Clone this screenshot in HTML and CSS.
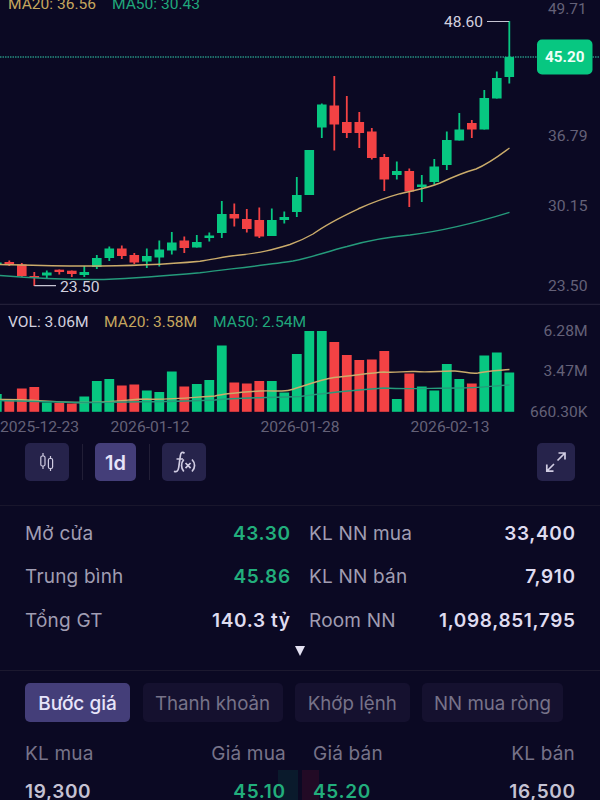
FILE: index.html
```html
<!DOCTYPE html>
<html lang="vi">
<head>
    <meta charset="UTF-8">
    <meta name="viewport" content="width=device-width, initial-scale=1.0">
    <title>Biểu đồ giá</title>
    <link rel="stylesheet" href="styles.css">
</head>
<body>
    <svg class="chart" width="600" height="438" viewBox="0 0 600 438">
        <line class="current-line" x1="0" y1="57" x2="600" y2="57"/>
        <line class="pane-line" x1="0" y1="304.3" x2="600" y2="304.3"/>
        <g id="candles"></g>
        <g id="volumes"></g>

        <!-- moving averages, price pane -->
        <path class="ma20" d="M0 264.5C20 265 50 266 85 266C120 266 160 265 200 261.2C215 259 225 256.500 240 255C262 252.500 272 250 290 244.500C300 241 306 238 313 234C328 223 342 216.500 359 208.500C375 201.500 388 197 400 193.700C415 190 425 189 440 183C455 176 465 172 476 169C490 163 500 155 509.500 148"/>
        <path class="ma50" d="M0 275.500C30 278 65 280 104 279.500C140 278 170 275.500 200 272.800C230 269 270 264.500 293 261C312 257.500 325 252 347 246.500C370 240 385 237 410 235C445 230.500 475 223 509.500 212.300"/>

        <!-- moving averages, volume pane -->
        <path class="ma20" d="M0 399.500C20 399 40 401 75 402.500C110 403 130 399 147 399C165 400 185 398 215 396C225 393.500 245 392 260 391C275 390.500 283 392 290 390C305 386 315 381 334 377.500C355 375.500 370 373 384 372C395 373 405 371 415 371.500C430 373 440 370.500 455 371C465 371.500 470 374 478 373C490 370.500 500 370.500 509.500 369.500"/>
        <path class="ma50" d="M0 400.500C40 401.500 70 402.500 95 402.500C130 401.500 180 402 215 400C240 397 270 398 300 396.500C325 393 345 391 384 388C410 389.500 430 388 459 388C480 388 490 386 509.500 385"/>

        <path class="callout" d="M487 21.500H509M34.300 285.700H56"/>
        <text class="callout-text" x="444" y="27.300" textLength="39" lengthAdjust="spacingAndGlyphs">48.60</text>
        <text class="callout-text" x="60" y="291.700" textLength="39.500" lengthAdjust="spacingAndGlyphs">23.50</text>

        <text class="legend gold" x="8" y="9" textLength="88" lengthAdjust="spacingAndGlyphs">MA20: 36.56</text>
        <text class="legend green" x="112" y="9" textLength="88" lengthAdjust="spacingAndGlyphs">MA50: 30.43</text>
        <text class="legend light" x="8" y="326.700" textLength="80.500" lengthAdjust="spacingAndGlyphs">VOL: 3.06M</text>
        <text class="legend gold" x="104" y="326.700" textLength="93" lengthAdjust="spacingAndGlyphs">MA20: 3.58M</text>
        <text class="legend green" x="213" y="326.700" textLength="93" lengthAdjust="spacingAndGlyphs">MA50: 2.54M</text>

        <text class="axis" x="548" y="14.300" textLength="38.500" lengthAdjust="spacingAndGlyphs">49.71</text>
        <text class="axis" x="548" y="140.700" textLength="39.500" lengthAdjust="spacingAndGlyphs">36.79</text>
        <text class="axis" x="548" y="211.200" textLength="39.500" lengthAdjust="spacingAndGlyphs">30.15</text>
        <text class="axis" x="548" y="291.200" textLength="39.500" lengthAdjust="spacingAndGlyphs">23.50</text>
        <text class="axis" x="543.500" y="336" textLength="44" lengthAdjust="spacingAndGlyphs">6.28M</text>
        <text class="axis" x="543.500" y="375.700" textLength="44" lengthAdjust="spacingAndGlyphs">3.47M</text>
        <text class="axis" x="530" y="416.500" textLength="57.500" lengthAdjust="spacingAndGlyphs">660.30K</text>

        <text class="axis" x="0" y="432.300" textLength="79" lengthAdjust="spacingAndGlyphs">2025-12-23</text>
        <text class="axis" x="110.500" y="432.300" textLength="79" lengthAdjust="spacingAndGlyphs">2026-01-12</text>
        <text class="axis" x="260.500" y="432.300" textLength="79" lengthAdjust="spacingAndGlyphs">2026-01-28</text>
        <text class="axis" x="410.500" y="432.300" textLength="79" lengthAdjust="spacingAndGlyphs">2026-02-13</text>

        <rect class="price-tag" x="537" y="39.500" width="55.500" height="35" rx="5"/>
        <text class="price-text" x="545" y="62" textLength="39.500" lengthAdjust="spacingAndGlyphs">45.20</text>
    </svg>

    <div class="toolbar">
        <button class="tool">
            <svg width="16" height="20" viewBox="0 0 16 20">
                <path d="M4 1v3M4 14v3M11.500 4v3M11.500 16v3"/>
                <rect x="1.800" y="4" width="4.200" height="10" rx="1.500"/>
                <rect x="9.400" y="6.500" width="4.200" height="10" rx="1.500"/>
            </svg>
        </button>
        <span class="tool-divider"></span>
        <button class="tool tool-active">1d</button>
        <span class="tool-divider"></span>
        <button class="tool">
            <svg width="24" height="24" viewBox="0 0 24 24">
                <path class="thick" d="M12.500 3.300C10.500 1.300 8.800 2.500 8.400 5.500L6.700 17.500C6.200 21 4.500 22.500 2 21.200M4.500 9H11"/>
                <path class="thick" d="M11.800 9.500C8.800 13 8.800 18 11.800 21.500M20 9.500C23.400 13 23.400 18 20 21.500M13.500 13L18.600 18.200M18.600 13L13.500 18.200"/>
            </svg>
        </button>
        <button class="tool tool-expand">
            <svg width="22" height="22" viewBox="0 0 22 22">
                <path class="thick" d="M12.500 9.500L19.500 2.500M13.500 2H20V8.500M9 13L2.500 19.500M1.800 13.500V20.200H8.500"/>
            </svg>
        </button>
    </div>

    <div class="stats">
        <div class="stat"><span>Mở cửa</span><b class="up">43.30</b></div>
        <div class="stat"><span>KL NN mua</span><b>33,400</b></div>
        <div class="stat"><span>Trung bình</span><b class="up">45.86</b></div>
        <div class="stat"><span>KL NN bán</span><b>7,910</b></div>
        <div class="stat"><span>Tổng GT</span><b>140.3 tỷ</b></div>
        <div class="stat"><span>Room NN</span><b>1,098,851,795</b></div>
    </div>
    <div class="more"><span class="arrow"></span></div>

    <div class="tabs">
        <button class="tab tab-active">Bước giá</button>
        <button class="tab tab-trade">Thanh khoản</button>
        <button class="tab tab-match">Khớp lệnh</button>
        <button class="tab tab-foreign">NN mua ròng</button>
    </div>

    <div class="book">
        <div class="book-side">
            <div class="book-head"><span>KL mua</span><span>Giá mua</span></div>
            <div class="book-row bid"><b>19,300</b><b class="up">45.10</b></div>
        </div>
        <div class="book-side">
            <div class="book-head"><span>Giá bán</span><span>KL bán</span></div>
            <div class="book-row ask"><b class="up">45.20</b><b>16,500</b></div>
        </div>
    </div>
    <script src="chart.js"></script>
</body>
</html>
```
FILE: styles.css
```css
body {
    margin: 0;
    height: 800px;
    overflow: hidden;
    background-color: #0b0923;
    color: #dfdcf0;
    font-family: Inter, sans-serif;
    font-size: 18.5px;
}
button {
    border: none;
    padding: 0;
    font-family: inherit;
}
.chart {
    display: block;
    font-family: Roboto, sans-serif;
    font-size: 15px;
}
.current-line {
    stroke: #268d80;
    stroke-width: 1.3;
    stroke-dasharray: 1.5 1;
}
.pane-line {
    stroke: #29263e;
    stroke-width: 1;
}
.up-fill {
    fill: #07c781;
}
.down-fill {
    fill: #f34244;
}
.ma20, .ma50, .callout {
    fill: none;
    stroke-width: 1.4;
}
.ma20 {
    stroke: #cbac6b;
}
.ma50 {
    stroke: #259b7b;
}
.callout {
    stroke: #c6c4d2;
    stroke-width: 1.2;
}
.callout-text, .light {
    fill: #d2d0df;
}
.gold {
    fill: #c5a65e;
}
.green {
    fill: #20a77b;
}
.axis {
    fill: #646178;
}
.price-tag {
    fill: #07c781;
}
.price-text {
    fill: #effff8;
    font-weight: 700;
}
.toolbar {
    display: flex;
    align-items: center;
    padding: 5px 25px 24px;
    border-bottom: 1px solid #19162c;
}
.tool {
    display: flex;
    align-items: center;
    justify-content: center;
    width: 44px;
    height: 38px;
    border-radius: 5px;
    background-color: #26234b;
    color: #e7e4fa;
}
.tool svg {
    fill: none;
    stroke: #d0cce2;
    stroke-width: 1.2;
}
.tool .thick {
    stroke-width: 1.7;
}
.tool-active {
    width: 41px;
    padding-top: 2px;
    background-color: #443e79;
    font-size: 20px;
    font-weight: 600;
}
.tool-divider {
    width: 1px;
    height: 36px;
    margin: 0 12.5px;
    background-color: #211e36;
}
.tool-expand {
    width: 38px;
    margin-left: auto;
}
.stats {
    display: grid;
    grid-template-columns: 265px 266px;
    grid-auto-rows: 43.7px;
    column-gap: 19px;
    padding: 5.2px 25px 0;
}
.stat {
    display: flex;
    align-items: center;
    justify-content: space-between;
}
.stat span {
    color: #a09db2;
    font-size: 19px;
    letter-spacing: 0.2px;
}
b {
    margin-right: -0.7px;
    font-size: 19px;
    font-weight: 600;
    letter-spacing: 0.65px;
}
.up {
    color: #22ae7c;
}
.more {
    display: flex;
    justify-content: center;
    padding: 3.8px 0 14px;
    border-bottom: 1px solid #1c192f;
}
.arrow {
    border: 5.5px solid transparent;
    border-top: 10px solid #e4e1f2;
    border-bottom: 0;
}
.tabs {
    display: flex;
    gap: 12.5px;
    padding: 12px 25px 0;
}
.tab {
    height: 39px;
    padding-top: 2px;
    border-radius: 5px;
    background-color: #15112f;
    color: #777389;
    font-size: 18.7px;
    white-space: nowrap;
}
.tab-active {
    width: 105px;
    background-color: #443e79;
    color: #e7e4fa;
    font-size: 19px;
    font-weight: 500;
}
.tab-trade {
    width: 140px;
}
.tab-match {
    width: 114.5px;
}
.tab-foreign {
    width: 141px;
}
.book {
    display: grid;
    grid-template-columns: 1fr 1fr;
    column-gap: 4px;
    padding-top: 14px;
}
.book-head, .book-row {
    display: flex;
    align-items: center;
    justify-content: space-between;
    height: 34px;
    padding: 0 13px 0 25px;
}
.book-head {
    padding-right: 12px;
    color: #777389;
    font-size: 19px;
    letter-spacing: 0.2px;
}
.book-row {
    height: 42px;
}
.book-side:last-child .book-head,
.book-side:last-child .book-row {
    padding: 0 25px 0 11px;
}
.book-row b:not(.up) {
    color: #c5c2d3;
}
.bid {
    background: linear-gradient(#0a1a2c, #0a1a2c) right / 20px 100% no-repeat;
}
.ask {
    background: linear-gradient(#220a25, #220a25) left / 17px 100% no-repeat;
}
```
FILE: chart.js
```javascript
// direction, wick top, body top, body bottom, wick bottom, volume top
const candles = [
    ['up', 262, 262.5, 264.5, 265, 394],
    ['down', 260.5, 262, 264.5, 266, 400],
    ['down', 263, 264.5, 276, 277, 388.5],
    ['down', 272, 276, 278, 286, 387],
    ['up', 270.5, 272.5, 275.5, 278, 402.5],
    ['down', 269.5, 269.7, 272, 274.5, 403],
    ['down', 270.5, 270.7, 274, 277, 403.5],
    ['up', 266, 272, 275, 277, 396.5],
    ['up', 255, 258, 267, 269, 381],
    ['up', 246.5, 248.5, 258, 261, 379],
    ['down', 245.5, 248.5, 256, 259, 385.5],
    ['down', 253, 255, 262.5, 264, 384.5],
    ['up', 248.5, 256, 261.5, 268, 390.5],
    ['up', 240.5, 249.5, 257.5, 266.5, 392],
    ['up', 232, 242.5, 250.5, 254.5, 371.5],
    ['down', 236.5, 240.5, 248, 253, 386.5],
    ['up', 235, 242, 247.5, 247.5, 384],
    ['up', 232.5, 235.5, 238, 241.5, 380],
    ['up', 201, 214, 233, 238, 345.5],
    ['down', 203.5, 214, 218.5, 226.5, 382.5],
    ['down', 209, 219, 229, 232.5, 383.5],
    ['down', 207.5, 220, 236.5, 238, 381],
    ['up', 208.5, 220, 236, 236, 381],
    ['up', 211.5, 217, 220, 223.5, 392.5],
    ['up', 177, 195, 212, 217, 354],
    ['up', 150, 150, 195, 195, 331],
    ['up', 103.5, 104.5, 127.5, 138, 331],
    ['down', 76, 105.5, 124.5, 150.5, 342],
    ['down', 96, 122, 133, 138, 355],
    ['down', 112, 122, 133, 148, 360],
    ['down', 128, 131.5, 158, 159.5, 359.5],
    ['down', 154, 157, 179.5, 191, 351],
    ['up', 161.5, 171, 175, 179.5, 399],
    ['down', 168.5, 171, 191.5, 207, 373.5],
    ['up', 175, 184.5, 187, 202, 386.5],
    ['up', 159, 166.5, 182, 184.5, 390.5],
    ['up', 131.5, 140, 165, 170, 364],
    ['up', 113, 129.5, 140.5, 140.5, 379],
    ['down', 120, 123, 129.5, 138, 383.5],
    ['up', 90, 98, 129.5, 129.5, 355.5],
    ['up', 71.5, 78, 98.5, 98.5, 352.5],
    ['up', 21, 57, 77, 83.5, 372.5]
];
const step = 12.5;
const firstX = -3.2;
const volumeBase = 411.8;

function addRect(parent, type, x, y, width, height) {
    const rect = document.createElementNS('http://www.w3.org/2000/svg', 'rect');
    rect.setAttribute('class', type + '-fill');
    rect.setAttribute('x', x);
    rect.setAttribute('y', y);
    rect.setAttribute('width', width);
    rect.setAttribute('height', height);
    parent.appendChild(rect);
}

const candleGroup = document.getElementById('candles');
const volumeGroup = document.getElementById('volumes');

candles.forEach(([type, high, top, bottom, low, volume], i) => {
    const x = firstX + i * step;
    addRect(candleGroup, type, x - 0.9, high, 1.8, low - high);
    addRect(candleGroup, type, x - 4.8, top, 9.6, bottom - top);
    addRect(volumeGroup, type, x - 4.9, volume, 9.8, volumeBase - volume);
});
```
